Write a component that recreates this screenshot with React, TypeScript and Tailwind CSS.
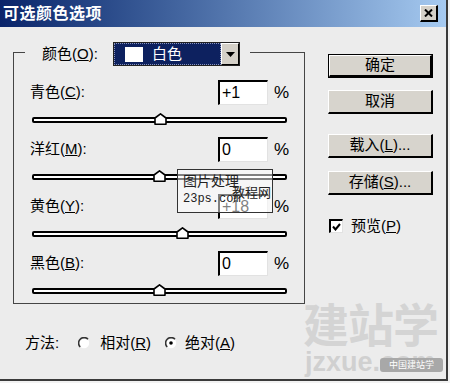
import React from "react";

const ui = "font-['Liberation_Sans','Noto_Sans_CJK_SC',sans-serif]";

function Thumb() {
  return (
    <svg width="13" height="12" viewBox="0 0 13 12">
      <polygon points="6.5,0.8 12,5 12,11.2 1,11.2 1,5" fill="#fff" stroke="#000" strokeWidth="1.6" strokeLinejoin="round" />
    </svg>
  );
}

function Slider({ value }: { value: number }) {
  const left = ((value + 100) / 200) * 255 - 6.5;
  return (
    <div className="relative ml-[18px] h-[32px] w-[255px] pt-[12px]">
      <div className="h-[6px] w-full rounded-[2px] border-2 border-black bg-white" />
      <div className="absolute top-[8px]" style={{ left }}>
        <Thumb />
      </div>
    </div>
  );
}

function Row({ name, hot, value }: { name: string; hot: string; value: number }) {
  return (
    <div>
      <div className="flex h-[25px] items-center pl-[16px]">
        <span className="w-[188px] text-[15px] text-black">
          {name}(<u>{hot}</u>):
        </span>
        <div className="flex h-[25px] w-[50px] items-center border-t-2 border-l-2 border-r border-b border-black border-r-[#e2e2e2] border-b-[#e2e2e2] bg-white pl-[2px] text-[16px] text-black">
          {value > 0 ? `+${value}` : value}
        </div>
        <span className="ml-[6px] text-[17px] text-black">%</span>
      </div>
      <Slider value={value} />
    </div>
  );
}

function Btn({ label, hot, tail, isDefault }: { label: string; hot?: string; tail?: string; isDefault?: boolean }) {
  return (
    <div className={isDefault ? "border border-black" : ""}>
      <div
        className={`flex items-center justify-center border-t border-l border-r-2 border-b-2 border-white border-r-black border-b-black bg-[#d7d4cd] text-[15px] text-black ${
          isDefault ? "h-[22px]" : "h-[24px]"
        }`}
      >
        {label}
        {hot ? (
          <>
            (<u>{hot}</u>){tail}
          </>
        ) : null}
      </div>
    </div>
  );
}

function Radio({ checked }: { checked?: boolean }) {
  return (
    <svg width="12" height="12" viewBox="0 0 12 12">
      <circle cx="6" cy="6" r="5.2" fill="#fff" />
      <path d="M10 2.2 A5.2 5.2 0 0 0 2.2 10" stroke="#333" strokeWidth="1.6" fill="none" />
      {checked ? <circle cx="6" cy="6" r="1.8" fill="#000" /> : null}
    </svg>
  );
}

export default function App() {
  return (
    <div className={`relative h-[383px] w-[450px] overflow-hidden bg-[#f2f2f2] ${ui}`}>
      <div className="h-[381px] w-[448px] border-r-2 border-b-2 border-[#3a3a3a] bg-[#ececec]">
        {/* title bar */}
        <div className="flex h-[27px] items-center justify-between bg-linear-to-r from-[#0a246a] to-[#a6caf0] pl-[3px] pr-[8px]">
          <span className="text-[16px] font-bold tracking-[0.5px] text-white">可选颜色选项</span>
          <div className="flex h-[17px] w-[18px] items-center justify-center border-t border-l border-r-2 border-b-2 border-white border-r-black border-b-black bg-[#d4d0c8]">
            <svg width="9" height="8" viewBox="0 0 9 8">
              <path d="M1 0.5 L8 7.5 M8 0.5 L1 7.5" stroke="#000" strokeWidth="2" />
            </svg>
          </div>
        </div>

        <div className="flex">
          {/* left column */}
          <div className="w-[328px]">
            <div className="ml-[13px] mt-[25px] h-[252px] w-[292px] border border-[#454545]">
              <div className="-mt-[11px] ml-[11px] flex w-fit items-center bg-[#ececec] pl-[17px] pr-[10px]">
                <span className="w-[71px] text-[15px] text-black">
                  颜色(<u>O</u>):
                </span>
                <div className="flex h-[24px] w-[127px] border border-[#222] bg-[#0d215f]">
                  <div className="flex flex-1 items-center border border-dotted border-[#8d96bb] pl-[10px]">
                    <div className="h-[15px] w-[18px] bg-white" />
                    <span className="ml-[9px] text-[15px] text-white">白色</span>
                  </div>
                  <div className="flex w-[18px] items-center justify-center border-t border-l border-r border-b border-white border-r-black border-b-black bg-[#d4d0c8]">
                    <svg width="9" height="5" viewBox="0 0 9 5">
                      <polygon points="0,0 9,0 4.5,5" fill="#000" />
                    </svg>
                  </div>
                </div>
              </div>
              <div className="pt-[14px]">
                <Row name="青色" hot="C" value={1} />
                <Row name="洋红" hot="M" value={0} />
                <Row name="黄色" hot="Y" value={18} />
                <Row name="黑色" hot="B" value={0} />
              </div>
            </div>

            <div className="mt-[29px] flex h-[20px] items-center pl-[25px] text-[15px] text-black">
              <span>方法:</span>
              <span className="ml-[19px] flex items-center">
                <Radio />
              </span>
              <span className="ml-[10px]">
                相对(<u>R</u>)
              </span>
              <span className="ml-[14px] flex items-center">
                <Radio checked />
              </span>
              <span className="ml-[8px]">
                绝对(<u>A</u>)
              </span>
            </div>
          </div>

          {/* right column */}
          <div className="w-[105px] pt-[27px]">
            <Btn label="确定" isDefault />
            <div className="mt-[12px]">
              <Btn label="取消" />
            </div>
            <div className="mt-[20px]">
              <Btn label="载入" hot="L" tail="..." />
            </div>
            <div className="mt-[13px]">
              <Btn label="存储" hot="S" tail="..." />
            </div>
            <div className="mt-[20px] flex items-center pl-[1px]">
              <div className="flex h-[14px] w-[14px] items-center justify-center border-t-2 border-l-2 border-r border-b border-black border-r-[#e2e2e2] border-b-[#e2e2e2] bg-white">
                <svg width="9" height="8" viewBox="0 0 9 8">
                  <path d="M1 3.5 L3.5 6.5 L8 1" stroke="#000" strokeWidth="2" fill="none" />
                </svg>
              </div>
              <span className="ml-[8px] text-[15px] text-black">
                预览(<u>P</u>)
              </span>
            </div>
          </div>
        </div>
      </div>

      {/* watermark: 23ps */}
      <div className="absolute left-[177px] top-[169px] h-[44px] w-[96px] whitespace-nowrap border border-[#333] bg-white/50">
        <span className="absolute left-[5px] top-[3px] text-[14px] leading-[16px] text-[#222]">图片处理</span>
        <span className="absolute left-[5px] top-[22px] font-['Liberation_Mono',monospace] text-[12px] leading-[14px] text-[#222]">23ps.com</span>
        <span className="absolute left-[54px] top-[15px] text-[13px] leading-[15px] text-[#222]">教程网</span>
      </div>

      {/* watermark: jzxue */}
      <div className="absolute left-[303px] top-[298px] whitespace-nowrap text-[46px] font-bold leading-[56px] tracking-[-1px] text-[#d4d4d4]">建站学</div>
      <div className="absolute left-[305px] top-[348px] whitespace-nowrap font-['Liberation_Sans',sans-serif] text-[27px] font-bold leading-[28px] text-[#d0d0d0]">jzxue.com</div>
      <div className="absolute left-[380px] top-[358px] flex h-[14px] w-[63px] items-center justify-center whitespace-nowrap rounded-[3px] bg-[#a8a8a8] text-[9px] leading-[10px] text-white">
        中国建站学
      </div>
    </div>
  );
}
